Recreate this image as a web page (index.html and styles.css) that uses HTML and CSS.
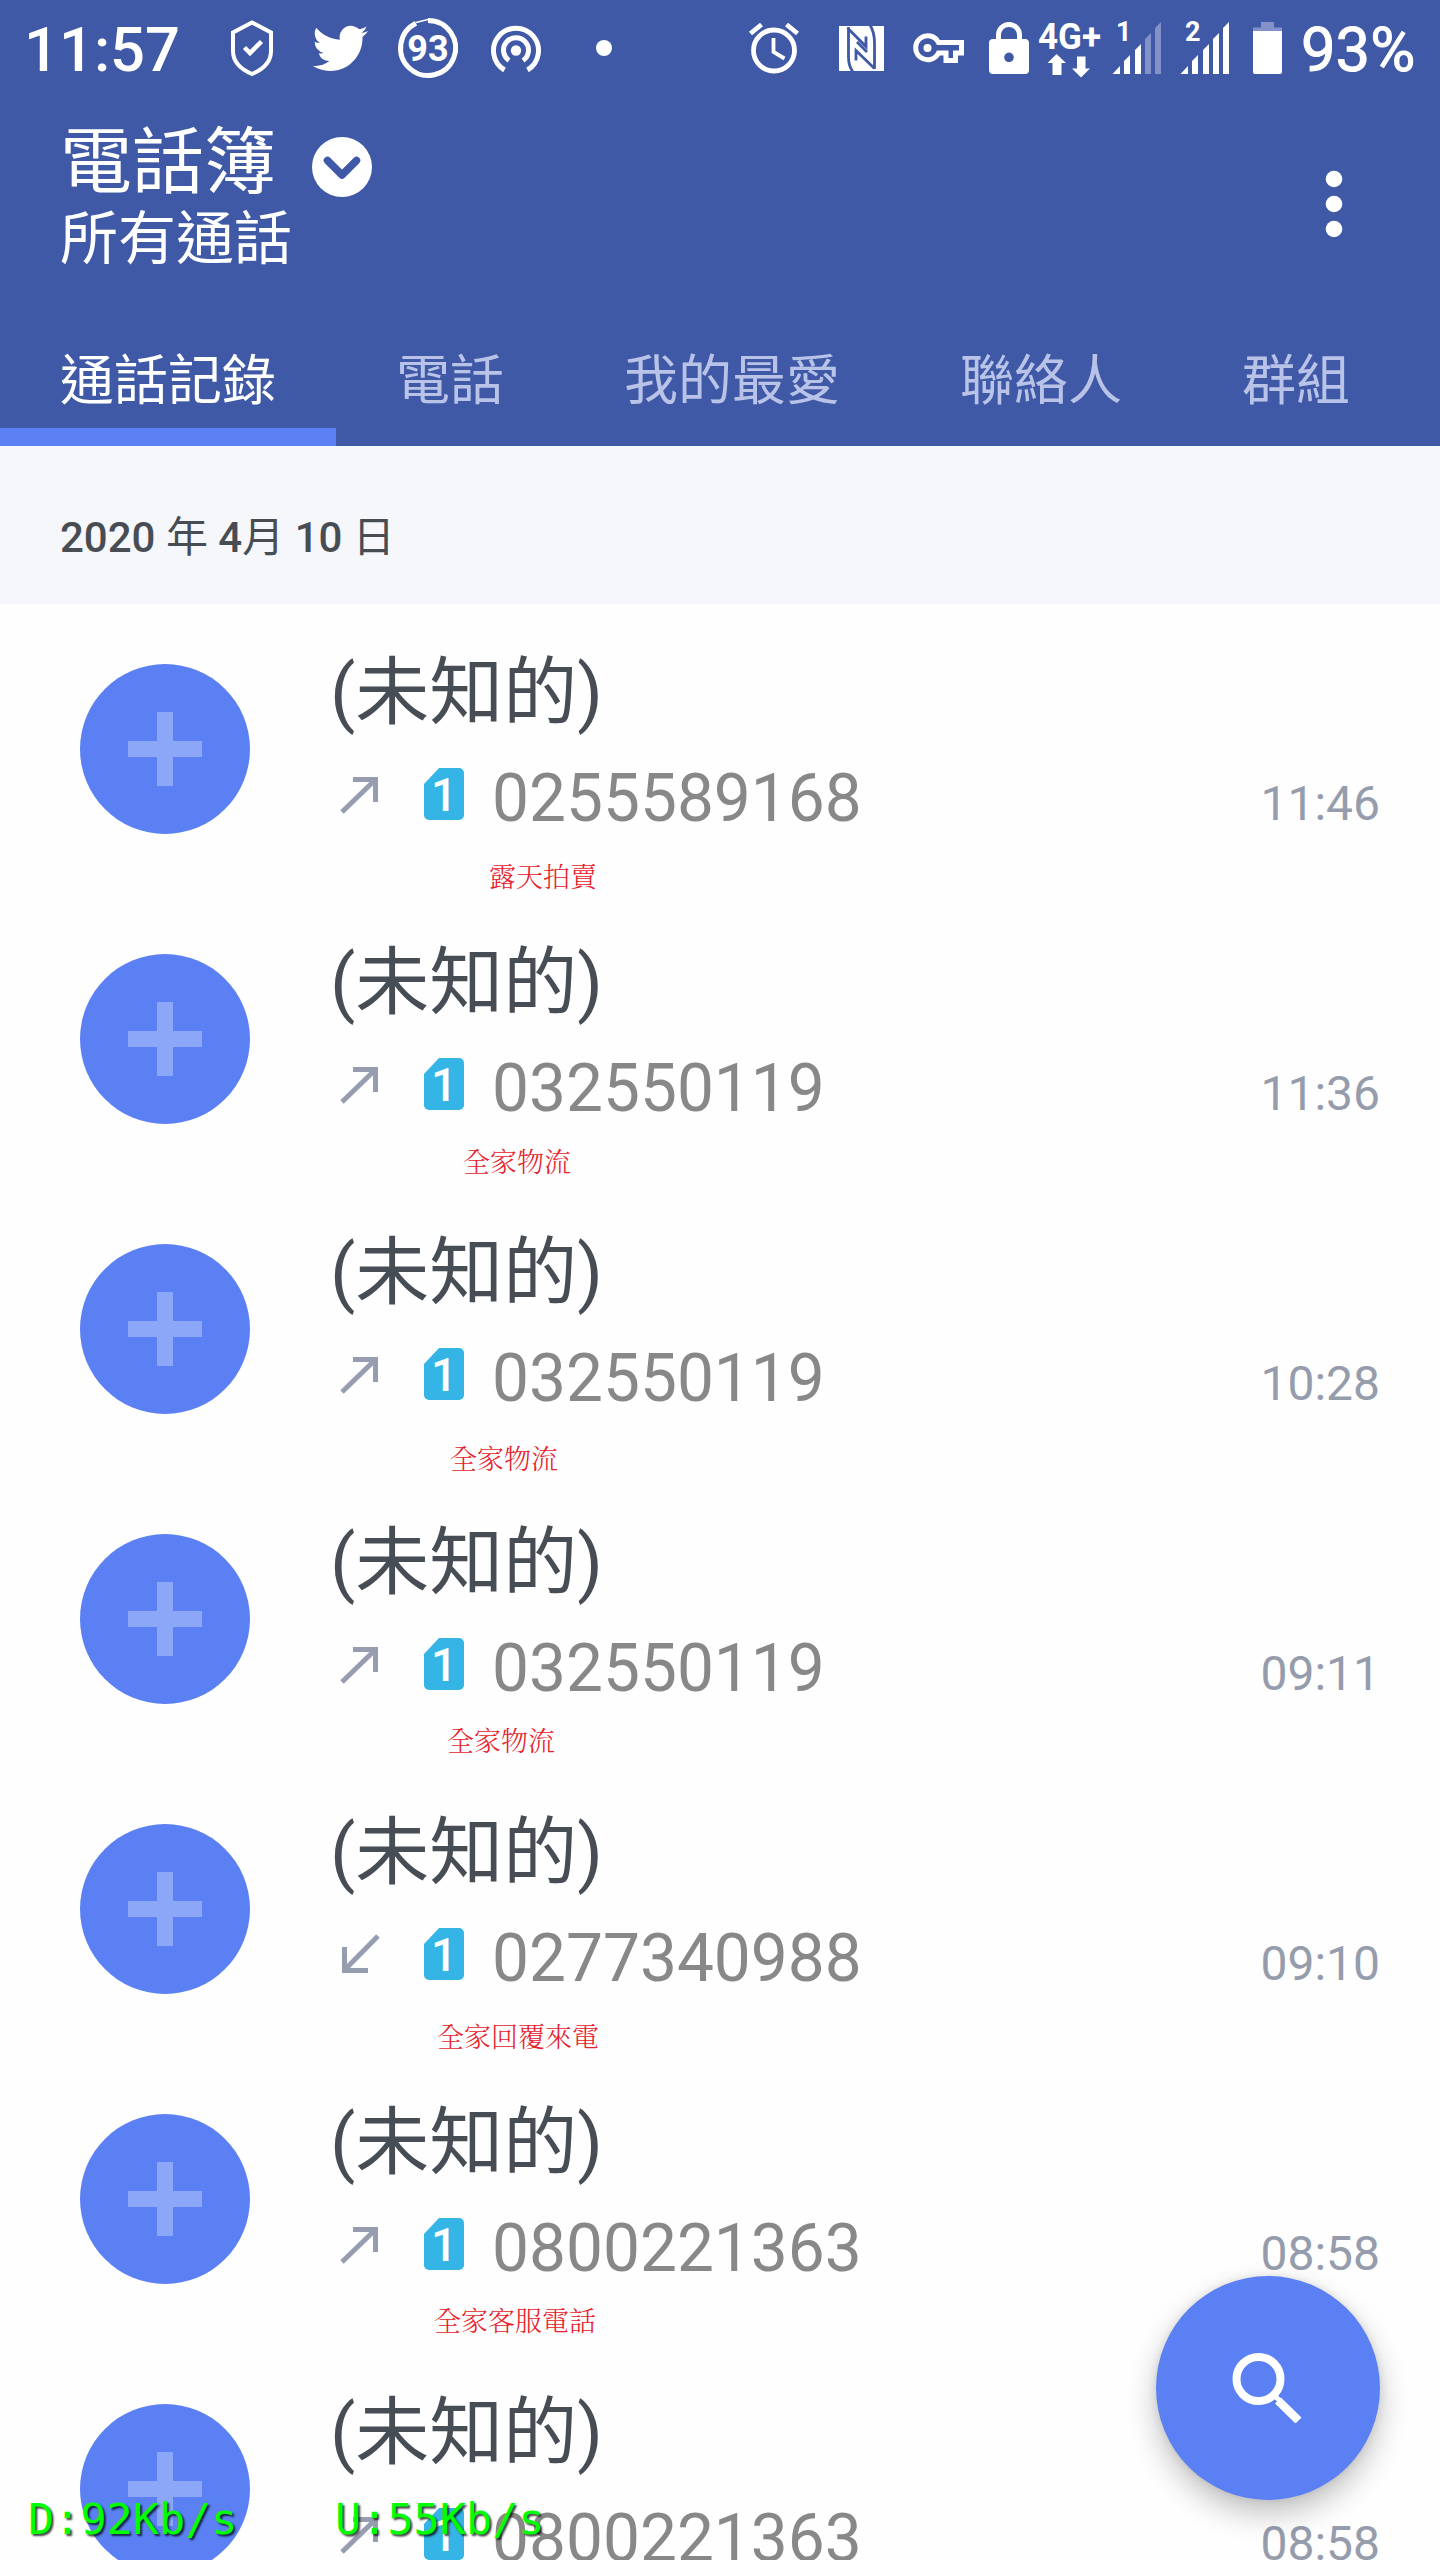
FILE: index.html
```html
<!DOCTYPE html>
<html lang="zh-Hant">
<head>
<meta charset="utf-8">
<title>電話簿</title>
<link rel="stylesheet" href="styles.css">
</head>
<body>
<div class="screen">
  <header class="header">
    <div class="status">
      <span class="clock">11:57</span>
      <svg width="88" height="100" viewBox="208 0 88 100"><path d="M252 22.500L271 32.500V51Q271 66 252 74Q233 66 233 51V32.500Z" fill="none" stroke="#fff" stroke-width="4"/><path d="M244.500 47.500L250 53L261.500 41.500" fill="none" stroke="#fff" stroke-width="4.500"/></svg>
      <svg width="88" height="100" viewBox="296 0 88 100"><path transform="translate(312.500 20.500) scale(2.320)" d="M23.950 4.570a10 10 0 0 1-2.820.78 4.960 4.960 0 0 0 2.160-2.730c-.95.560-2 .960-3.130 1.190a4.920 4.920 0 0 0-8.380 4.480C7.690 8.100 4.070 6.130 1.640 3.160a4.820 4.820 0 0 0-.67 2.480c0 1.710.870 3.210 2.190 4.100a4.900 4.900 0 0 1-2.230-.62v.06a4.920 4.920 0 0 0 3.950 4.830 5 5 0 0 1-2.210.08 4.940 4.940 0 0 0 4.600 3.420A9.870 9.870 0 0 1 0 19.540a13.990 13.990 0 0 0 7.550 2.210c9.050 0 14-7.500 14-13.980 0-.21 0-.42-.02-.63a9.940 9.940 0 0 0 2.420-2.570z" fill="#fff"/></svg>
      <svg width="88" height="100" viewBox="384 0 88 100"><path d="M428 20.500A27.500 27.500 0 1 1 416 23.300" fill="none" stroke="#fff" stroke-width="5"/><path d="M416 22.500L428 19.500" stroke="#fff" stroke-width="1.500"/><text x="428" y="61" class="ring-num">93</text></svg>
      <svg width="88" height="100" viewBox="472 0 88 100"><g fill="none" stroke="#fff" stroke-width="5"><path d="M504.500 70A22.500 22.500 0 1 1 527.500 70"/><path d="M509 60.500A12.500 12.500 0 1 1 523 60.500"/></g><circle cx="516" cy="50.500" r="5.200" fill="#fff"/></svg>
      <svg width="88" height="100" viewBox="560 0 88 100"><circle cx="604" cy="48" r="8" fill="#fff"/></svg>
      <span class="spacer"></span>
      <svg width="88" height="100" viewBox="730 0 88 100"><g fill="none" stroke="#fff" stroke-width="4.800"><circle cx="774" cy="50.500" r="20.500"/><path d="M750.500 33.500L761.500 24.500M797.500 33.500L786.500 24.500"/><path d="M773.500 38V52L784.500 58.500" stroke-width="3.800"/></g></svg>
      <svg width="82" height="100" viewBox="818 0 82 100"><rect x="839" y="26" width="45" height="45" fill="#fff"/><path d="M848.500 27V57Q848.500 66 853 72M847.500 28L866 46.500V36.500M874.500 68.500L856 50.500V60.500M870 25Q874.500 32 874.500 43V69M857 42L867 52" fill="none" stroke="#3f59a7" stroke-width="2.800"/></svg>
      <svg width="78" height="100" viewBox="900 0 78 100"><path d="M938.500 42.500H961.500V53H955.500V60.500H946V53H938.500A12 12 0 1 1 938.500 42.500Z" fill="none" stroke="#fff" stroke-width="5"/><circle cx="927.500" cy="48" r="4" fill="#fff"/></svg>
      <svg width="56" height="100" viewBox="978 0 56 100"><path d="M998.500 41V35a10.500 10.500 0 0 1 21 0V41" fill="none" stroke="#fff" stroke-width="5"/><path fill-rule="evenodd" d="M993 39h32a4 4 0 0 1 4 4v27a4 4 0 0 1-4 4h-32a4 4 0 0 1-4-4V43a4 4 0 0 1 4-4zM1009 52.500a4.800 4.800 0 1 0 .01 0z" fill="#fff"/></svg>
      <svg width="72" height="100" viewBox="1034 0 72 100"><text x="1038" y="49" textLength="63" lengthAdjust="spacingAndGlyphs" class="net">4G+</text><path d="M1056.500 54L1066 63H1061.500V75H1052.500V63H1047.500ZM1081 77.500L1090 68.500H1085.500V56.500H1077V68.500H1072Z" fill="#fff"/></svg>
      <svg width="68" height="100" viewBox="1106 0 68 100"><text x="1116" y="41" class="sig-num">1</text><path d="M1112.500 74L1120 66V74ZM1124 61L1130 55V74H1124ZM1135 50L1141 44V74H1135Z" fill="#fff"/><path d="M1145 39L1151 33V74H1145ZM1155 28L1161 22V74H1155Z" fill="#8292c8"/></svg>
      <svg width="68" height="100" viewBox="1174 0 68 100"><text x="1185" y="41" class="sig-num">2</text><path d="M1180.500 74L1188 66V74ZM1192 61L1198 55V74H1192ZM1203 50L1209 44V74H1203ZM1213 39L1219 33V74H1213ZM1223 28L1229 22V74H1223Z" fill="#fff"/></svg>
      <svg width="58" height="100" viewBox="1242 0 58 100"><path d="M1261 22H1274V27.500H1282V31H1253V27.500H1261Z" fill="#8292c8"/><path d="M1253 31H1282V72a2 2 0 0 1-2 2H1255a2 2 0 0 1-2-2Z" fill="#fff"/></svg>
      <span class="battery">93%</span>
    </div>
    <div class="appbar">
      <div class="titles">
        <div class="title-line">
          <h1 class="title">電話簿</h1>
          <svg class="chevron" width="60" height="60" viewBox="0 0 60 60"><circle cx="30" cy="30" r="30" fill="#fff"/><path d="M15.500 23.500L30 38L44.500 23.500" fill="none" stroke="#3f59a7" stroke-width="7.500" stroke-linecap="round" stroke-linejoin="round"/></svg>
        </div>
        <div class="subtitle">所有通話</div>
      </div>
      <svg class="more" width="18" height="68" viewBox="0 0 18 68" fill="#fff"><circle cx="9" cy="9" r="8.300"/><circle cx="9" cy="34" r="8.300"/><circle cx="9" cy="59" r="8.300"/></svg>
    </div>
    <nav class="tabs">
      <a class="tab active">通話記錄</a><a class="tab">電話</a><a class="tab">我的最愛</a><a class="tab">聯絡人</a><a class="tab">群組</a>
    </nav>
  </header>
  <div class="date"><b>2020</b> 年 <b>4</b>月 <b>10</b> 日</div>
  <main>
    <div class="row">
      <div class="avatar"><svg><use href="#plus"/></svg></div>
      <div class="info"><div class="name">(未知的)</div><div class="meta"><svg class="dir"><use href="#out"/></svg><svg class="sim"><use href="#sim"/></svg><span class="number">0255589168</span></div></div>
      <span class="time">11:46</span><span class="note n1">露天拍賣</span>
    </div>
    <div class="row">
      <div class="avatar"><svg><use href="#plus"/></svg></div>
      <div class="info"><div class="name">(未知的)</div><div class="meta"><svg class="dir"><use href="#out"/></svg><svg class="sim"><use href="#sim"/></svg><span class="number">032550119</span></div></div>
      <span class="time">11:36</span><span class="note n2">全家物流</span>
    </div>
    <div class="row">
      <div class="avatar"><svg><use href="#plus"/></svg></div>
      <div class="info"><div class="name">(未知的)</div><div class="meta"><svg class="dir"><use href="#out"/></svg><svg class="sim"><use href="#sim"/></svg><span class="number">032550119</span></div></div>
      <span class="time">10:28</span><span class="note n3">全家物流</span>
    </div>
    <div class="row">
      <div class="avatar"><svg><use href="#plus"/></svg></div>
      <div class="info"><div class="name">(未知的)</div><div class="meta"><svg class="dir"><use href="#out"/></svg><svg class="sim"><use href="#sim"/></svg><span class="number">032550119</span></div></div>
      <span class="time">09:11</span><span class="note n4">全家物流</span>
    </div>
    <div class="row">
      <div class="avatar"><svg><use href="#plus"/></svg></div>
      <div class="info"><div class="name">(未知的)</div><div class="meta"><svg class="dir"><use href="#in"/></svg><svg class="sim"><use href="#sim"/></svg><span class="number">0277340988</span></div></div>
      <span class="time">09:10</span><span class="note n5">全家回覆來電</span>
    </div>
    <div class="row">
      <div class="avatar"><svg><use href="#plus"/></svg></div>
      <div class="info"><div class="name">(未知的)</div><div class="meta"><svg class="dir"><use href="#out"/></svg><svg class="sim"><use href="#sim"/></svg><span class="number">0800221363</span></div></div>
      <span class="time">08:58</span><span class="note n6">全家客服電話</span>
    </div>
    <div class="row">
      <div class="avatar"><svg><use href="#plus"/></svg></div>
      <div class="info"><div class="name">(未知的)</div><div class="meta"><svg class="dir"><use href="#out"/></svg><svg class="sim"><use href="#sim"/></svg><span class="number">0800221363</span></div></div>
      <span class="time">08:58</span>
    </div>
  </main>
  <div class="fab"><svg width="72" height="72" viewBox="0 0 72 72"><circle cx="27.500" cy="28" r="22" fill="none" stroke="#fff" stroke-width="8"/><path d="M47 49.500L67.500 69.500" stroke="#fff" stroke-width="8.500"/><path d="M42 43L49 50" stroke="#fff" stroke-width="5"/></svg></div>
  <div class="speed down">D:92Kb/s</div>
  <div class="speed up">U:55Kb/s</div>
</div>
<svg class="defs" width="0" height="0">
  <symbol id="plus" viewBox="0 0 74 74"><path d="M29 0h16v29h29v16H45v29H29V45H0V29h29z"/></symbol>
  <symbol id="out" viewBox="0 0 92 80"><path d="M10 55L43 23M21 22.500H43.500V45" fill="none" stroke="#979db0" stroke-width="5"/></symbol>
  <symbol id="in" viewBox="0 0 92 80"><path d="M46 19L13 52.500M12.500 30V53.500H36" fill="none" stroke="#979db0" stroke-width="5"/></symbol>
  <symbol id="sim" viewBox="0 0 40 52"><path d="M15 0H35a5 5 0 0 1 5 5V47a5 5 0 0 1-5 5H5a5 5 0 0 1-5-5V16z" fill="#35b5e5"/><text x="20" y="43" class="sim-digit">1</text></symbol>
</svg>
</body>
</html>
```
FILE: styles.css
```css
* { box-sizing: border-box; }
body { margin: 0; background: #fefefe; font-family: Roboto, "Noto Sans CJK TC", sans-serif; }
svg { display: block; flex: none; }
.defs { position: absolute; }
.screen { position: relative; width: 1440px; height: 2560px; overflow: hidden; background: #fefefe; }

.header { background: #3f59a7; color: #fff; height: 446px; }
.status { display: flex; height: 100px; padding: 0 20px 0 24px; }
.clock { width: 184px; font-size: 61.5px; font-weight: 500; line-height: 101px; white-space: nowrap; }
.spacer { width: 82px; }
.battery { margin-left: 1px; font-size: 61.5px; line-height: 101px; white-space: nowrap; -webkit-text-stroke: 1px #fff; }
.ring-num { font-size: 36px; font-weight: 700; fill: #fff; text-anchor: middle; }
.net { font-size: 37px; font-weight: 700; fill: #fff; }
.sig-num { font-size: 27px; font-weight: 700; fill: #fff; }

.appbar { display: flex; justify-content: space-between; height: 234px; padding: 23px 97px 0 60px; }
.title-line { display: flex; height: 80px; }
.title { margin: 0; font-size: 72px; line-height: 80px; font-weight: 400; }
.chevron { margin: 14px 0 0 36px; }
.subtitle { font-size: 58px; line-height: 73px; }
.more { margin-top: 47px; }

.tabs { display: flex; height: 112px; }
.tab { height: 112px; padding: 1px 60px 0; font-size: 54px; line-height: 94px; color: #b9c3e8; border-bottom: 18px solid transparent; white-space: nowrap; }
.tab.active { color: #fff; border-color: #5b80f4; }

.date { height: 158px; padding-left: 60px; background: #f5f7fb; color: #484d54; font-size: 42px; line-height: 183px; }
.date b { font-weight: 500; }

.row { position: relative; display: flex; height: 290px; padding: 0 60px 0 80px; }
.avatar { display: flex; align-items: center; justify-content: center; width: 170px; height: 170px; margin-top: 60px; border-radius: 50%; background: #5b80f4; }
.avatar svg { width: 74px; height: 74px; fill: #8ca6f8; }
.info { flex: 1; padding: 44px 0 0 82px; }
.name { margin-left: -2px; font-size: 74px; line-height: 90px; color: #474d54; }
.meta { display: flex; margin-top: 19px; height: 80px; }
.dir { width: 92px; height: 80px; }
.sim { width: 40px; height: 52px; margin: 11px 28px 0 0; }
.sim-digit { font-size: 46px; font-weight: 500; fill: #fff; text-anchor: middle; }
.number { font-size: 65.8px; line-height: 83px; color: #888; }
.time { font-size: 48px; line-height: 80px; margin-top: 160px; color: #959cac; }

.note { position: absolute; color: #e8202a; font-family: "Noto Serif CJK TC", "Noto Sans CJK TC", serif; font-weight: 300; font-size: 27px; line-height: 40px; white-space: nowrap; }
.n1 { left: 489px; top: 252px; }
.n2 { left: 463px; top: 247px; }
.n3 { left: 450px; top: 254px; }
.n4 { left: 447px; top: 246px; }
.n5 { left: 437px; top: 252px; }
.n6 { left: 434px; top: 246px; }

.fab { position: absolute; left: 1156px; top: 2276px; width: 224px; height: 224px; padding: 75px 0 0 75px; border-radius: 50%; background: #5b80f4; box-shadow: 0 14px 30px rgba(0, 0, 0, .24), 0 0 8px rgba(0, 0, 0, .1); }
.speed { position: absolute; top: 2489px; font-family: "DejaVu Sans Mono", monospace; font-size: 43.5px; line-height: 60px; color: #0f0; text-shadow: 2px 2px 2px rgba(0, 0, 0, .75); }
.down { left: 28px; }
.up { left: 335px; }
```
